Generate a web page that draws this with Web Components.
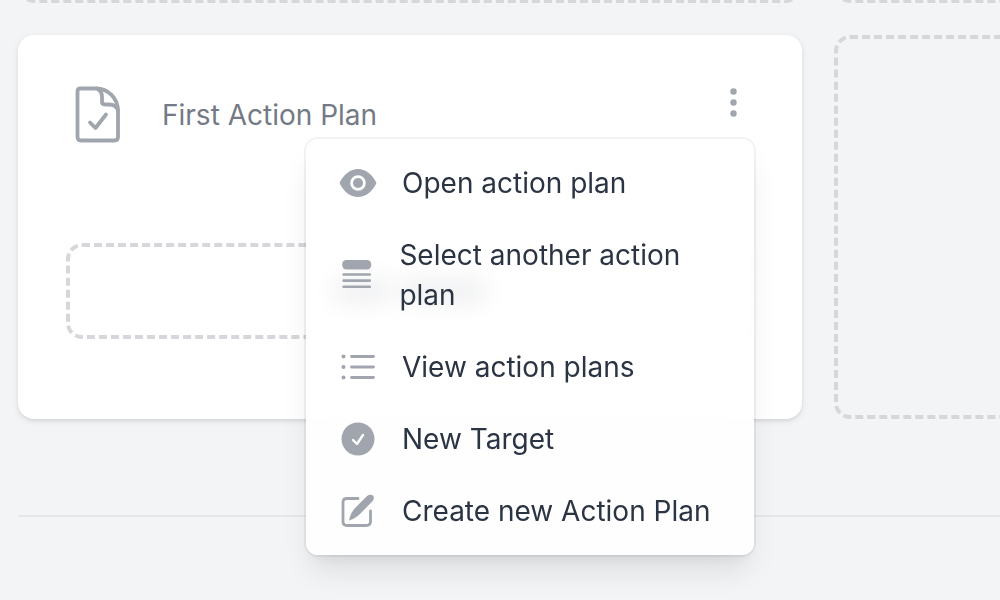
<!DOCTYPE html>
<html lang="en">
<head>
<meta charset="utf-8">
<meta name="viewport" content="width=device-width, initial-scale=1">
<title>Action plans</title>
<style>
    body {
        margin: 0;
        min-height: 100vh;
        overflow: hidden;
        background: #f3f4f6;
        color: #2b3443;
        font: 28px/40px Inter, "Liberation Sans", sans-serif;
    }
</style>
</head>
<body>
<plan-board>
    <empty-tile slot="previous"></empty-tile>
    <empty-tile slot="previous"></empty-tile>
    <plan-card>
        First Action Plan
        <action-menu slot="actions">
            <menu-action icon="eye">Open action plan</menu-action>
            <menu-action icon="stack">Select another action plan</menu-action>
            <menu-action icon="list">View action plans</menu-action>
            <menu-action icon="check">New Target</menu-action>
            <menu-action icon="edit">Create new Action Plan</menu-action>
        </action-menu>
    </plan-card>
    <empty-tile></empty-tile>
</plan-board>

<script>
function createTemplate(content) {
    let template = document.createElement('template');
    template.innerHTML = content;
    return template;
}

const icons = {
    eye: `<path fill="currentColor" fill-rule="evenodd" d="M0.500 19C5 10 11.500 5 19 5S33 10 37.500 19C33 28 26.500 33 19 33S5 28 0.500 19ZM19 11.200a7.800 7.800 0 1 0 0 15.600a7.800 7.800 0 1 0 0-15.600Z"/>
        <circle cx="19" cy="19" r="5" fill="currentColor"/>`,
    stack: `<rect x="3.500" y="3" width="31" height="10" rx="4.500" fill="currentColor"/>
        <path d="M5 18.500h28M5 25h28M5 31.500h28" stroke="currentColor" stroke-width="2.800" stroke-linecap="round"/>`,
    list: `<path d="M12.500 8.500h22M12.500 19h22M12.500 29.500h22" stroke="currentColor" stroke-width="2.800" stroke-linecap="round"/>
        <g fill="currentColor"><circle cx="4.500" cy="8.500" r="2"/><circle cx="4.500" cy="19" r="2"/><circle cx="4.500" cy="29.500" r="2"/></g>`,
    check: `<circle cx="19" cy="19" r="16.500" fill="currentColor"/>
        <path d="M14 20l4 4l6-9" fill="none" stroke="#fff" stroke-width="2.400" stroke-linecap="round" stroke-linejoin="round"/>`,
    edit: `<path d="M19 6.500H8Q4 6.500 4 10.500V29.500Q4 33.500 8 33.500H27Q31.500 33.500 31.500 29.500V19" fill="none" stroke="currentColor" stroke-width="2.800" stroke-linecap="round"/>
        <path fill="currentColor" d="M10 28.500C11 23 13 19 17 15L27.500 4.500C29 3 30.500 2.500 32 2.700C34.500 3 35.500 5.500 34.500 7.500C34 8.500 33.500 9.300 32.500 10.300L22 21C18.500 24.500 15 27 10 28.500Z"/>`
};

const boardTemplate = createTemplate(`
    <style>
        :host {
            display: block;
            padding-left: 18px;
            overflow: hidden;
        }
        .row {
            display: grid;
            grid-auto-flow: column;
            grid-auto-columns: calc(100% - 198px);
            gap: 32px;
        }
        .previous {
            height: 3px;
            margin-bottom: 32px;
            align-items: end;
            align-content: end;
            overflow: hidden;
        }
        hr {
            height: 2px;
            margin: 96px 0;
            border: 0;
            background: #e5e7eb;
        }
    </style>
    <div class="row previous"><slot name="previous"></slot></div>
    <div class="row"><slot></slot></div>
    <hr>
`);

const tileTemplate = createTemplate(`
    <style>
        :host {
            display: block;
            box-sizing: border-box;
            min-height: 384px;
            border: 4px dashed #d6d7d9;
            border-radius: 16px;
        }
    </style>
`);

const cardTemplate = createTemplate(`
    <style>
        :host {
            display: block;
            padding: 48px 48px 80px;
            border-radius: 16px;
            background: #fff;
            box-shadow: 0 2px 6px rgba(0, 0, 0, 0.1), 0 2px 4px -2px rgba(0, 0, 0, 0.1);
        }
        header {
            display: flex;
            align-items: center;
            gap: 32px;
            color: #747a85;
        }
        svg {
            width: 64px;
            height: 64px;
            flex: none;
            color: #a0a5ae;
        }
        h2 {
            flex: 1;
            margin: 0;
            font: inherit;
        }
        ::slotted(action-menu) {
            align-self: flex-start;
        }
        .target {
            display: flex;
            align-items: center;
            justify-content: center;
            gap: 12px;
            box-sizing: border-box;
            height: 96px;
            margin-top: 96px;
            border: 4px dashed #d6d7db;
            border-radius: 16px;
        }
        .target i {
            width: 56px;
            height: 22px;
            background: #6b7280;
        }
        .target i + i {
            width: 84px;
        }
    </style>
    <header>
        <svg viewBox="0 0 64 64" fill="none" stroke="currentColor" stroke-width="3.800" stroke-linecap="round" stroke-linejoin="round" aria-hidden="true">
            <path d="M14.500 5.500H30C42 5.500 52 15 52 28V54Q52 57.500 48.500 57.500H15Q11.500 57.500 11.500 54V8.500Q11.500 5.500 14.500 5.500Z"/>
            <path d="M31 5.500Q36 8 36 14V18.500Q36 21.500 39 21.500H43Q50 21.500 52 27"/>
            <path d="M24 39.500L29.500 45L40 31.500"/>
        </svg>
        <h2><slot></slot></h2>
        <slot name="actions"></slot>
    </header>
    <div class="target"><i></i><i></i></div>
`);

const menuTemplate = createTemplate(`
    <style>
        :host {
            display: block;
            position: relative;
        }
        .toggle {
            display: flex;
            align-items: center;
            justify-content: center;
            width: 42px;
            height: 40px;
            padding: 0;
            border: 0;
            background: none;
            color: #a0a5ae;
            cursor: pointer;
        }
        .menu {
            position: absolute;
            top: 56px;
            right: 0;
            z-index: 1;
            box-sizing: border-box;
            width: 448px;
            padding: 8px 0;
            border-radius: 12px;
            background: rgba(255, 255, 255, 0.88);
            backdrop-filter: blur(12px);
            color: #2b3443;
            box-shadow: 0 0 0 2px rgba(0, 0, 0, 0.05),
                0 20px 30px -6px rgba(0, 0, 0, 0.1),
                0 8px 12px -4px rgba(0, 0, 0, 0.05);
        }
        .menu[hidden] {
            display: none;
        }
    </style>
    <button class="toggle" type="button" aria-label="Plan actions" aria-haspopup="true" aria-expanded="true">
        <svg width="8" height="32" viewBox="0 0 8 32" fill="currentColor" aria-hidden="true">
            <circle cx="4.500" cy="4.500" r="3.200"/><circle cx="4.500" cy="15.500" r="3.200"/><circle cx="4.500" cy="26.500" r="3.200"/>
        </svg>
    </button>
    <div class="menu"><slot></slot></div>
`);

const actionTemplate = createTemplate(`
    <style>
        :host {
            display: block;
        }
        button {
            display: flex;
            align-items: center;
            width: 100%;
            padding: 16px 32px;
            border: 0;
            background: none;
            color: inherit;
            font: inherit;
            text-align: left;
            cursor: pointer;
        }
        svg {
            width: 40px;
            height: 40px;
            margin-right: 24px;
            color: #a0a5ae;
        }
        button:hover {
            background: rgba(0, 0, 0, 0.03);
        }
    </style>
    <button type="button">
        <svg viewBox="-1 -1 40 40" aria-hidden="true"></svg>
        <span><slot></slot></span>
    </button>
`);

class TemplateElement extends HTMLElement {
    constructor(template) {
        super();
        const shadow = this.attachShadow({ mode: 'open' });
        shadow.append(template.content.cloneNode(true));
    }
}

class PlanBoard extends TemplateElement {
    constructor() {
        super(boardTemplate);
    }
}

class EmptyTile extends TemplateElement {
    constructor() {
        super(tileTemplate);
    }
}

class PlanCard extends TemplateElement {
    constructor() {
        super(cardTemplate);
    }
}

class ActionMenu extends TemplateElement {
    constructor() {
        super(menuTemplate);
        const toggle = this.shadowRoot.querySelector('.toggle');
        const menu = this.shadowRoot.querySelector('.menu');

        toggle.addEventListener('click', () => {
            menu.hidden = !menu.hidden;
            toggle.setAttribute('aria-expanded', String(!menu.hidden));
        });
    }
}

class MenuAction extends TemplateElement {
    constructor() {
        super(actionTemplate);
    }

    connectedCallback() {
        this.shadowRoot.querySelector('svg').innerHTML = icons[this.getAttribute('icon')] || '';
    }
}

customElements.define('plan-board', PlanBoard);
customElements.define('empty-tile', EmptyTile);
customElements.define('plan-card', PlanCard);
customElements.define('action-menu', ActionMenu);
customElements.define('menu-action', MenuAction);
</script>
</body>
</html>
